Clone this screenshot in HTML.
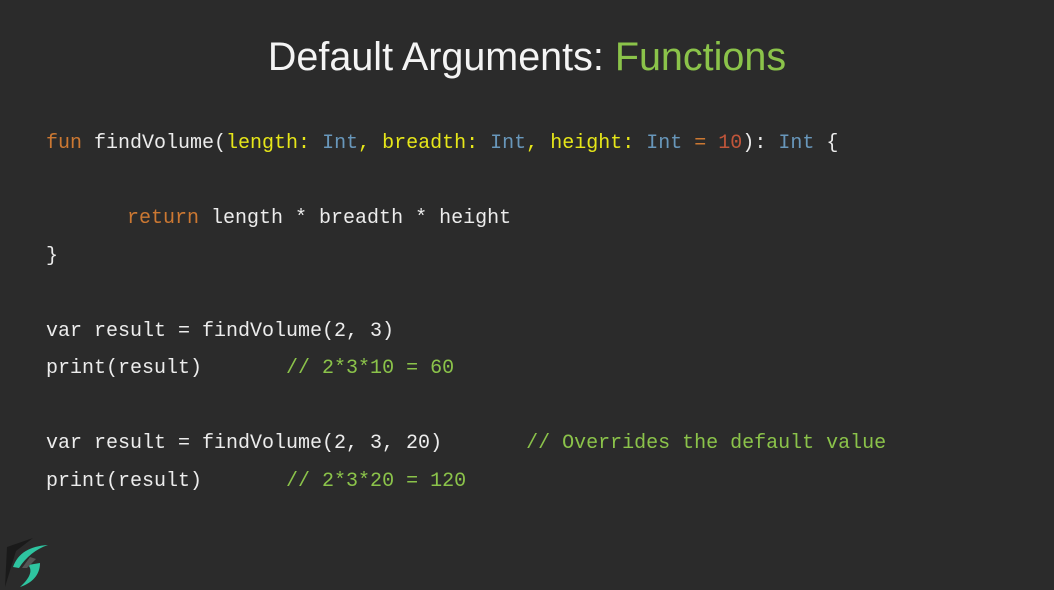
<!DOCTYPE html>
<html><head><meta charset="utf-8"><style>
html,body{margin:0;padding:0;}
body{width:1054px;height:590px;background:#2b2b2b;overflow:hidden;position:relative;font-family:"Liberation Sans",sans-serif;}
.title{position:absolute;top:35px;left:0;width:1054px;text-align:center;font-size:39.5px;color:#f4f4f4;white-space:nowrap;}
.title span{color:#8bc34a;}
pre{position:absolute;left:46px;top:125px;margin:0;font-family:"Liberation Mono",monospace;font-size:20px;line-height:37.5px;color:#ececec;}
.k{color:#cc7832}.p{color:#e6e619}.t{color:#6897bb}.n{color:#c0553a}.c{color:#8bc34a}
</style></head><body>
<div class="title">Default Arguments: <span>Functions</span></div>
<pre><span class="k">fun</span> findVolume(<span class="p">length:</span> <span class="t">Int</span><span class="p">,</span> <span class="p">breadth:</span> <span class="t">Int</span><span class="p">,</span> <span class="p">height:</span> <span class="t">Int</span> <span class="k">=</span> <span class="n">10</span>): <span class="t">Int</span> {

       <span class="k" style="margin-left:-3px">return</span> length * breadth * height
}

var result = findVolume(2, 3)
print(result)       <span class="c">// 2*3*10 = 60</span>

var result = findVolume(2, 3, 20)       <span class="c">// Overrides the default value</span>
print(result)       <span class="c">// 2*3*20 = 120</span></pre>
<svg style="position:absolute;left:0;top:535px" width="60" height="55" viewBox="0 0 60 55">
<path d="M5 52 L7 12 L33 3 L16 16 Z" fill="#1a1a1a"/>
<path d="M13 32 C18 18 30 11 48 10 C36 14 26 22 19 33 Z" fill="#2ec4a0"/>
<path d="M20 52 C32 48 40 40 40 28 L28 30 C34 36 28 45 20 52 Z" fill="#2ec4a0"/>
<path d="M22 33 L30 22 L36 24 L27 33 Z" fill="#555"/>
</svg>
</body></html>
